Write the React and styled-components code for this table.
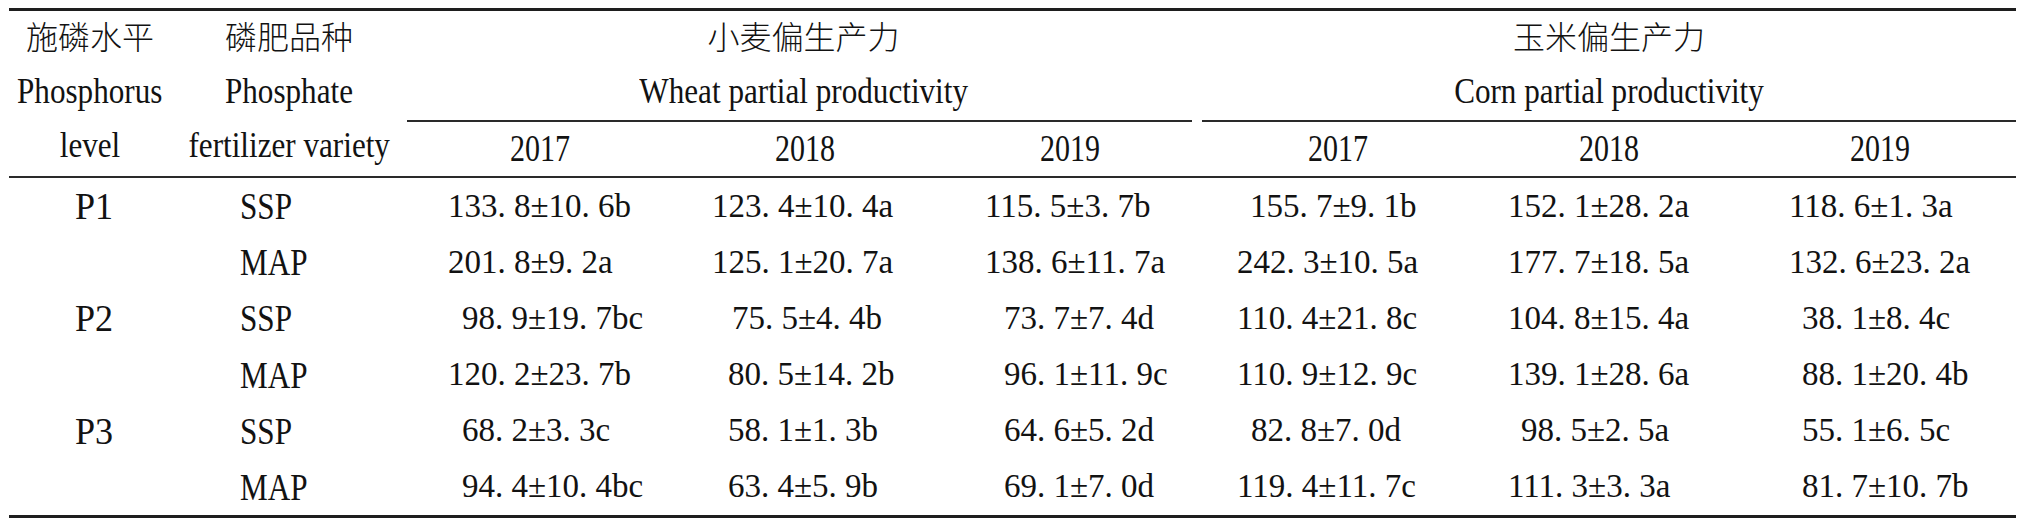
import React from 'react';
import styled, { createGlobalStyle } from 'styled-components';

const Global = createGlobalStyle`
  html, body { margin: 0; padding: 0; background: #ffffff; }
  body {
    font-family: "Liberation Serif", "Noto Sans CJK SC", serif;
    color: #121212;
  }
`;

const Page = styled.div`
  width: 2024px;
  height: 528px;
  box-sizing: border-box;
  padding: 8px 0 0 9px;
`;

const Table = styled.div`
  display: grid;
  width: 2007px;
  grid-template-columns: 162px 236px 265px 265px 265px 271px 271px 272px;
  grid-template-rows: 111px 56px repeat(6, 56.17px);
  border-top: 3px solid #1e1e1e;
  border-bottom: 3px solid #1e1e1e;
`;

const Stub = styled.div`
  grid-column: ${p => p.$col};
  grid-row: 1 / 3;
  border-bottom: 2px solid #2a2a2a;
  display: flex;
  flex-direction: column;
  align-items: center;
`;

const GroupHead = styled.div`
  grid-column: ${p => p.$cols};
  grid-row: 1;
  border-bottom: 2px solid #2a2a2a;
  margin-right: ${p => p.$trim || 0}px;
  display: flex;
  flex-direction: column;
  align-items: center;
  padding-left: ${p => p.$shift || 0}px;
`;

const Line = styled.div`
  height: 54px;
  line-height: 54px;
  white-space: nowrap;
  margin-top: ${p => p.$lift ? -3 : 0}px;
  margin-bottom: ${p => p.$lift ? 3 : 0}px;
`;

const Cjk = styled.span`
  font-family: "Noto Sans CJK SC", sans-serif;
  font-size: 32px;
  font-weight: 300;
`;

const Squeeze = styled.span`
  display: inline-block;
  white-space: nowrap;
  font-size: ${p => p.$size}px;
  transform: scaleX(${p => p.$sx});
  transform-origin: ${p => p.$origin || 'center'};
`;

const YearCell = styled.div`
  grid-row: 2;
  grid-column: ${p => p.$col};
  border-bottom: 2px solid #2a2a2a;
  display: flex;
  align-items: center;
  justify-content: center;
  padding-bottom: 2px;
`;

const LabelCell = styled.div`
  display: flex;
  align-items: center;
  padding-left: ${p => p.$pad}px;
`;

const DataCell = styled.div`
  display: flex;
  align-items: center;
  padding-left: ${p => p.$pad}px;
  font-size: 33px;
  white-space: nowrap;
`;

const COL_PAD = [41, 40, 48, 35, 35, 45];

const rows = [
  {
    level: 'P1', variety: 'SSP',
    vals: ['133. 8±10. 6b', '123. 4±10. 4a', '115. 5±3. 7b', '155. 7±9. 1b', '152. 1±28. 2a', '118. 6±1. 3a'],
    ind: [0, 0, 0, 13, 0, 0],
  },
  {
    level: '', variety: 'MAP',
    vals: ['201. 8±9. 2a', '125. 1±20. 7a', '138. 6±11. 7a', '242. 3±10. 5a', '177. 7±18. 5a', '132. 6±23. 2a'],
    ind: [0, 0, 0, 0, 0, 0],
  },
  {
    level: 'P2', variety: 'SSP',
    vals: ['98. 9±19. 7bc', '75. 5±4. 4b', '73. 7±7. 4d', '110. 4±21. 8c', '104. 8±15. 4a', '38. 1±8. 4c'],
    ind: [14, 20, 19, 0, 0, 13],
  },
  {
    level: '', variety: 'MAP',
    vals: ['120. 2±23. 7b', '80. 5±14. 2b', '96. 1±11. 9c', '110. 9±12. 9c', '139. 1±28. 6a', '88. 1±20. 4b'],
    ind: [0, 16, 19, 0, 0, 13],
  },
  {
    level: 'P3', variety: 'SSP',
    vals: ['68. 2±3. 3c', '58. 1±1. 3b', '64. 6±5. 2d', '82. 8±7. 0d', '98. 5±2. 5a', '55. 1±6. 5c'],
    ind: [14, 16, 19, 14, 13, 13],
  },
  {
    level: '', variety: 'MAP',
    vals: ['94. 4±10. 4bc', '63. 4±5. 9b', '69. 1±7. 0d', '119. 4±11. 7c', '111. 3±3. 3a', '81. 7±10. 7b'],
    ind: [14, 16, 19, 0, 0, 13],
  },
];

const years = ['2017', '2018', '2019', '2017', '2018', '2019'];

export default function App() {
  return (
    <>
      <Global />
      <Page>
        <Table>
          <Stub $col={1}>
            <Line $lift><Cjk>施磷水平</Cjk></Line>
            <Line><Squeeze $size={35} $sx={0.89}>Phosphorus</Squeeze></Line>
            <Line><Squeeze $size={35} $sx={0.89}>level</Squeeze></Line>
          </Stub>
          <Stub $col={2}>
            <Line $lift><Cjk>磷肥品种</Cjk></Line>
            <Line><Squeeze $size={35} $sx={0.89}>Phosphate</Squeeze></Line>
            <Line><Squeeze $size={35} $sx={0.89}>fertilizer variety</Squeeze></Line>
          </Stub>
          <GroupHead $cols="3 / 6" $trim={10} $shift={8}>
            <Line $lift><Cjk>小麦偏生产力</Cjk></Line>
            <Line><Squeeze $size={35} $sx={0.89}>Wheat partial productivity</Squeeze></Line>
          </GroupHead>
          <GroupHead $cols="6 / 9">
            <Line $lift><Cjk>玉米偏生产力</Cjk></Line>
            <Line><Squeeze $size={35} $sx={0.89}>Corn partial productivity</Squeeze></Line>
          </GroupHead>
          {years.map((y, i) => (
            <YearCell key={i} $col={i + 3}>
              <Squeeze $size={38} $sx={0.79}>{y}</Squeeze>
            </YearCell>
          ))}
          {rows.map((r, ri) => (
            <React.Fragment key={ri}>
              <LabelCell $pad={66}>
                {r.level && <Squeeze $size={38} $sx={0.95} $origin="left">{r.level}</Squeeze>}
              </LabelCell>
              <LabelCell $pad={69}>
                <Squeeze $size={38} $sx={0.82} $origin="left">{r.variety}</Squeeze>
              </LabelCell>
              {r.vals.map((v, ci) => (
                <DataCell key={ci} $pad={COL_PAD[ci] + r.ind[ci]}>{v}</DataCell>
              ))}
            </React.Fragment>
          ))}
        </Table>
      </Page>
    </>
  );
}
